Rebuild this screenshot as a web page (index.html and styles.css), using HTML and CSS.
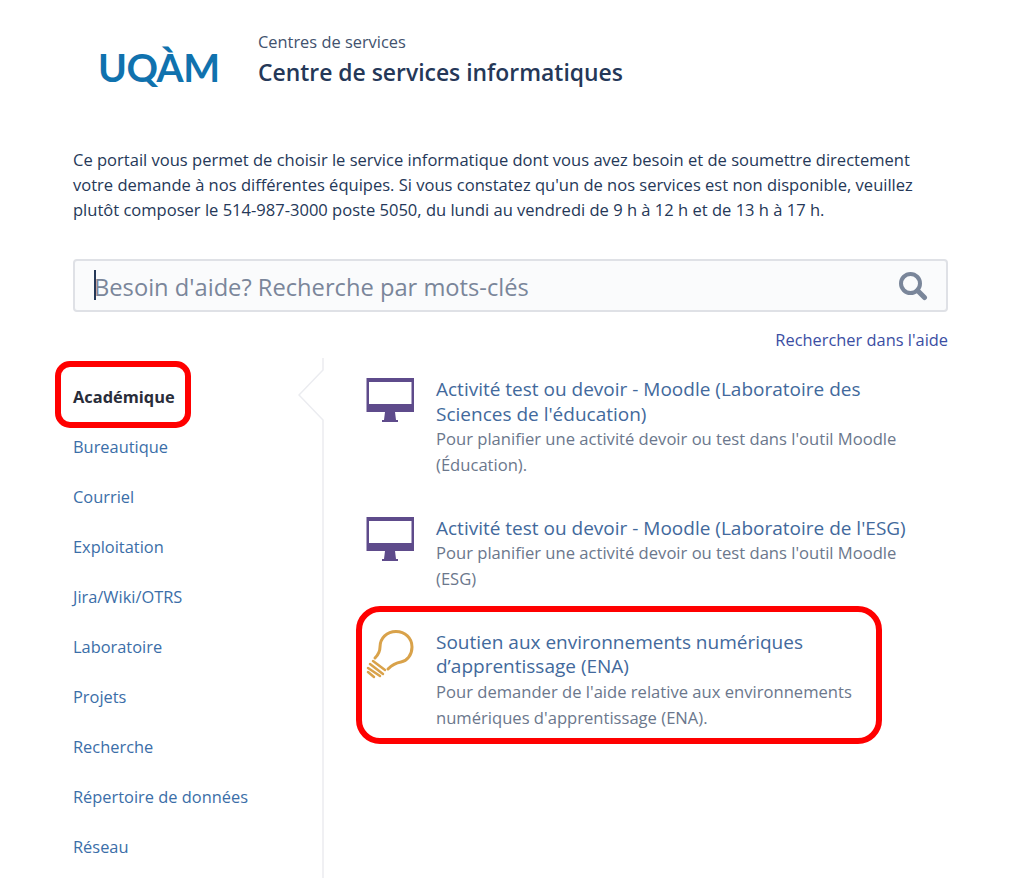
FILE: index.html
```html
<!DOCTYPE html>
<html>
<head>
    <title>Centre de services informatiques</title>
    <link rel="stylesheet" href="styles.css">
</head>
<body>
    <div class="page">
        <div class="header">
            <div class="logo">UQÀM</div>
            <div class="titles">
                <div class="crumb">Centres de services</div>
                <h1>Centre de services informatiques</h1>
            </div>
        </div>
        <p class="intro">Ce portail vous permet de choisir le service informatique dont vous avez besoin et de soumettre directement votre demande à nos différentes équipes. Si vous constatez qu'un de nos services est non disponible, veuillez plutôt composer le 514-987-3000 poste 5050, du lundi au vendredi de 9 h à 12 h et de 13 h à 17 h.</p>
        <div class="search">
            <span class="caret"></span>
            <span class="placeholder">Besoin d'aide? Recherche par mots-clés</span>
            <svg class="search-icon" width="30" height="30" viewBox="0 0 30 30">
                <circle cx="12.5" cy="12.5" r="9.5" fill="none" stroke="#7a869a" stroke-width="4"/>
                <path d="M19.5 19.5 L26.5 26.5" stroke="#7a869a" stroke-width="5" stroke-linecap="round"/>
            </svg>
        </div>
        <div class="help-link"><a href="#">Rechercher dans l'aide</a></div>
        <div class="main">
            <ul class="nav">
                <li class="active">Académique<span class="mark mark-nav"></span></li>
                <li>Bureautique</li>
                <li>Courriel</li>
                <li>Exploitation</li>
                <li>Jira/Wiki/OTRS</li>
                <li>Laboratoire</li>
                <li>Projets</li>
                <li>Recherche</li>
                <li>Répertoire de données</li>
                <li>Réseau</li>
            </ul>
            <div class="divider">
                <svg width="26" height="520" viewBox="0 0 26 520">
                    <path d="M25 0 V12 L1 37 L25 62 V520" fill="none" stroke="#ebecf0" stroke-width="1.5"/>
                </svg>
            </div>
            <div class="cards">
                <div class="card">
                    <svg class="icon" width="48" height="48" viewBox="0 0 48 48">
                        <path d="M0.500 0 H48 V34 H0.500 Z M3 4 V26 H45.500 V4 Z" fill="#5e4b8b" fill-rule="evenodd"/>
                        <path d="M19 34 H29 L30 42 H32 V44 H16 V42 H18 Z" fill="#5e4b8b"/>
                    </svg>
                    <div class="card-text">
                        <a class="card-title" href="#">Activité test ou devoir - Moodle (Laboratoire des Sciences de l'éducation)</a>
                        <p>Pour planifier une activité devoir ou test dans l'outil Moodle (Éducation).</p>
                    </div>
                </div>
                <div class="card">
                    <svg class="icon" width="48" height="48" viewBox="0 0 48 48">
                        <path d="M0.500 0 H48 V34 H0.500 Z M3 4 V26 H45.500 V4 Z" fill="#5e4b8b" fill-rule="evenodd"/>
                        <path d="M19 34 H29 L30 42 H32 V44 H16 V42 H18 Z" fill="#5e4b8b"/>
                    </svg>
                    <div class="card-text">
                        <a class="card-title" href="#">Activité test ou devoir - Moodle (Laboratoire de l'ESG)</a>
                        <p>Pour planifier une activité devoir ou test dans l'outil Moodle (ESG)</p>
                    </div>
                </div>
                <div class="card">
                    <svg class="icon icon-bulb" width="48" height="50" viewBox="0 0 48 50">
                        <path d="M9 28 C13 24 14 21 14 17 C14 8 21 1.500 30 1.500 C39 1.500 46 8 46 17 C46 25 41 31 35 32 C29 33 25 36 22 39" fill="none" stroke="#d9a24a" stroke-width="3" stroke-linecap="round"/>
                        <path d="M7 31 L19 40 M4 34 L17 44 M2 38 L14 46 M2 42 L8 47" fill="none" stroke="#d9a24a" stroke-width="2.500" stroke-linecap="round"/>
                    </svg>
                    <div class="card-text">
                        <a class="card-title" href="#">Soutien aux environnements numériques d’apprentissage (ENA)</a>
                        <p>Pour demander de l'aide relative aux environnements numériques d'apprentissage (ENA).</p>
                    </div>
                    <span class="mark mark-card"></span>
                </div>
            </div>
        </div>
    </div>
</body>
</html>
```

FILE: styles.css
```css
html, body {
    margin: 0;
    height: 889px;
    overflow: hidden;
}
body {
    background-color: #fff;
    color: #172b4d;
    font-family: "Open Sans", "Noto Sans", sans-serif;
    font-size: 16.4px;
}
a {
    text-decoration: none;
}
.page {
    padding: 0 79px 0 73px;
}
.header {
    display: flex;
    height: 147px;
    padding-top: 30px;
    box-sizing: border-box;
}
.logo {
    width: 185px;
    padding: 12px 0 0 25px;
    box-sizing: border-box;
    font-family: "Lato", sans-serif;
    font-size: 39px;
    font-weight: 700;
    letter-spacing: -0.5px;
    line-height: 50px;
    color: #1072ae;
}
.crumb {
    color: #42526e;
    line-height: 24px;
}
h1 {
    margin: 3px 0 0;
    font-size: 22.900px;
    font-weight: 600;
    line-height: 32px;
    color: #253858;
}
.intro {
    width: 860px;
    margin: 0;
    font-size: 16.550px;
    line-height: 25px;
    color: #253858;
}
.search {
    position: relative;
    display: flex;
    align-items: center;
    height: 53px;
    margin-top: 37px;
    padding: 0 18px 0 19px;
    box-sizing: border-box;
    background-color: #fafbfc;
    border: 2px solid #dfe1e6;
    border-radius: 4px;
}
.caret {
    position: absolute;
    left: 19px;
    top: 9px;
    width: 2px;
    height: 30px;
    background-color: #253858;
}
.placeholder {
    flex: 1;
    padding-top: 2px;
    font-size: 23.700px;
    color: #7a869a;
}
.help-link {
    margin-top: 16px;
    text-align: right;
    line-height: 24px;
}
.help-link a {
    color: #3b4ea3;
}
.main {
    display: flex;
    height: 520px;
    margin-top: 6px;
}
.nav {
    width: 225px;
    margin: 0;
    padding: 14px 0 0;
    list-style: none;
    color: #3b6ea8;
}
.nav li {
    position: relative;
    height: 50px;
    line-height: 50px;
}
.nav .active {
    color: #292d3a;
    font-weight: 700;
}
.divider {
    height: 520px;
}
.divider svg {
    display: block;
}
.cards {
    flex: 1;
    padding: 19px 0 0 42px;
}
.card {
    position: relative;
    display: flex;
    gap: 22px;
    margin-bottom: 37.500px;
}
.card-text {
    width: 480px;
}
.icon {
    flex: none;
    margin-top: 1px;
}
.icon-bulb {
    margin-top: 0;
}
.card-title {
    display: block;
    font-size: 19px;
    line-height: 24.500px;
    color: #42699c;
}
.card p {
    margin: 0;
    font-size: 16.600px;
    line-height: 26px;
    color: #6b778c;
}
.mark {
    position: absolute;
    box-sizing: border-box;
    border: 6px solid #ff0000;
    border-radius: 15px;
}
.mark-nav {
    left: -18px;
    top: -11px;
    width: 136px;
    height: 67px;
}
.mark-card {
    left: -10px;
    top: -24px;
    width: 526px;
    height: 138px;
    border-radius: 24px;
}
```
